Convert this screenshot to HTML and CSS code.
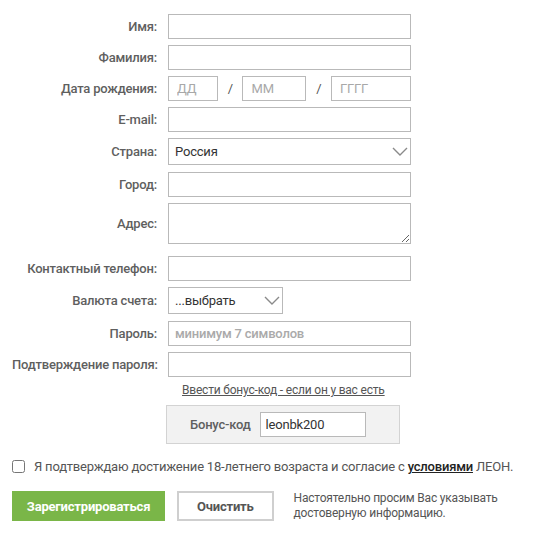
FILE: index.html
```html
<!DOCTYPE html>
<html lang="ru">

<head>
    <meta charset="UTF-8">
    <meta name="viewport" content="width=device-width, initial-scale=1.0">
    <title>Регистрация</title>
    <link rel="stylesheet" href="styles.css">
</head>

<body>
    <form class="reg-form" id="regForm">
        <div class="row">
            <label for="firstName">Имя:</label>
            <input type="text" id="firstName">
        </div>
        <div class="row">
            <label for="lastName">Фамилия:</label>
            <input type="text" id="lastName">
        </div>
        <div class="row">
            <label>Дата рождения:</label>
            <div class="date">
                <input type="text" class="day" placeholder="ДД">
                <span class="slash">/</span>
                <input type="text" class="month" placeholder="ММ">
                <span class="slash">/</span>
                <input type="text" class="year" placeholder="ГГГГ">
            </div>
        </div>
        <div class="row">
            <label for="email">E-mail:</label>
            <input type="text" id="email">
        </div>
        <div class="row row-select">
            <label for="country">Страна:</label>
            <div class="select-wrap">
                <select id="country">
                    <option>Россия</option>
                </select>
                <svg class="chevron" width="16" height="9" viewBox="0 0 16 9"><path d="M1 1l7 7 7-7" fill="none" stroke="#8a8a8a" stroke-width="1.4"/></svg>
            </div>
        </div>
        <div class="row">
            <label for="city">Город:</label>
            <input type="text" id="city">
        </div>
        <div class="row row-address">
            <label for="address">Адрес:</label>
            <textarea id="address"></textarea>
        </div>
        <div class="row">
            <label for="phone">Контактный телефон:</label>
            <input type="text" id="phone">
        </div>
        <div class="row row-select">
            <label for="currency">Валюта счета:</label>
            <div class="select-wrap select-small">
                <select id="currency">
                    <option>...выбрать</option>
                </select>
                <svg class="chevron" width="16" height="9" viewBox="0 0 16 9"><path d="M1 1l7 7 7-7" fill="none" stroke="#8a8a8a" stroke-width="1.4"/></svg>
            </div>
        </div>
        <div class="row">
            <label for="password">Пароль:</label>
            <input type="password" id="password" placeholder="минимум 7 символов">
        </div>
        <div class="row">
            <label for="password2">Подтверждение пароля:</label>
            <input type="password" id="password2">
        </div>

        <a href="#" class="bonus-link">Ввести бонус-код - если он у вас есть</a>

        <div class="bonus-box">
            <span class="bonus-label">Бонус-код</span>
            <input type="text" class="bonus-input" value="leonbk200">
        </div>

        <label class="agree">
            <input type="checkbox">
            <span>Я подтверждаю достижение 18-летнего возраста и согласие с <a href="#">условиями</a> ЛЕОН.</span>
        </label>

        <div class="actions">
            <button type="submit" class="btn-register">Зарегистрироваться</button>
            <button type="reset" class="btn-clear">Очистить</button>
            <p class="notice">Настоятельно просим Вас указывать достоверную информацию.</p>
        </div>
    </form>
</body>

</html>
```

FILE: styles.css
```css
body {
    font-family: Roboto, "Liberation Sans", Arial, sans-serif;
    background-color: #fff;
    margin: 0;
    color: #555;
    font-size: 13px;
    letter-spacing: -0.2px;
}

.reg-form {
    padding: 14px 0 0 12px;
    width: 520px;
}

.row {
    display: flex;
    align-items: center;
    margin-bottom: 6px;
}

.row > label {
    width: 145px;
    margin-right: 11px;
    text-align: right;
    font-weight: 500;
    color: #5f5f5f;
    flex-shrink: 0;
    white-space: nowrap;
}

input[type="text"],
input[type="password"],
textarea,
select {
    box-sizing: border-box;
    border: 1px solid #b9b9b9;
    border-radius: 0;
    height: 25px;
    font-family: inherit;
    font-size: 13px;
    letter-spacing: -0.2px;
    color: #333;
    padding: 0 6px;
    background: #fff;
    outline: none;
}

.row > input,
.row > textarea {
    width: 243px;
}

input::placeholder {
    color: #aaa;
}

#password::placeholder {
    font-weight: 500;
}

.date {
    display: flex;
    align-items: center;
    justify-content: space-between;
    width: 243px;
}

.date input {
    padding: 0 8px;
}

.date input::placeholder {
    color: #a8a8a8;
}

.day {
    width: 50px;
}

.month {
    width: 64px;
}

.year {
    width: 80px;
}

.slash {
    color: #555;
}

.row-select {
    margin-bottom: 7px;
}

.select-wrap {
    position: relative;
    width: 243px;
}

.select-wrap select {
    width: 100%;
    height: 27px;
    appearance: none;
    -webkit-appearance: none;
    padding: 0 6px;
    color: #333;
}

.select-small {
    width: 115px;
}

.chevron {
    position: absolute;
    right: 3px;
    top: 9px;
    pointer-events: none;
}

.row-address {
    margin-bottom: 12px;
}

textarea {
    height: 41px;
    padding: 4px 6px;
    resize: vertical;
}

.bonus-link {
    display: block;
    margin: 5px 0 0 170px;
    color: #555;
    font-size: 12px;
    line-height: 15px;
}

.bonus-box {
    box-sizing: border-box;
    display: flex;
    align-items: center;
    margin: 7px 0 0 154px;
    width: 234px;
    height: 39px;
    background: #f2f2f2;
    border: 1px solid #d3d3d3;
    padding-left: 23px;
}

.bonus-label {
    font-weight: 500;
    color: #5f5f5f;
    margin-right: 9px;
}

.bonus-box .bonus-input {
    width: 106px;
    padding: 0 5px;
}

.agree {
    display: flex;
    align-items: center;
    margin-top: 15px;
    white-space: nowrap;
}

.agree input {
    margin: 0 9px 0 0;
    width: 13px;
    height: 13px;
}

.agree a {
    color: #222;
    font-weight: 500;
}

.actions {
    display: flex;
    align-items: center;
    margin-top: 17px;
}

.btn-register {
    width: 154px;
    height: 30px;
    background-color: #7ab648;
    color: #fff;
    border: none;
    font-family: inherit;
    font-size: 13px;
    font-weight: 700;
    letter-spacing: -0.2px;
    cursor: pointer;
}

.btn-clear {
    box-sizing: border-box;
    width: 97px;
    height: 30px;
    margin-left: 12px;
    background: #fff;
    border: 2px solid #cfcfcf;
    color: #555;
    font-family: inherit;
    font-size: 13px;
    font-weight: 700;
    letter-spacing: -0.2px;
    cursor: pointer;
}

.notice {
    margin: 0 0 0 20px;
    font-size: 12px;
    line-height: 15px;
    width: 240px;
    color: #555;
}
```
